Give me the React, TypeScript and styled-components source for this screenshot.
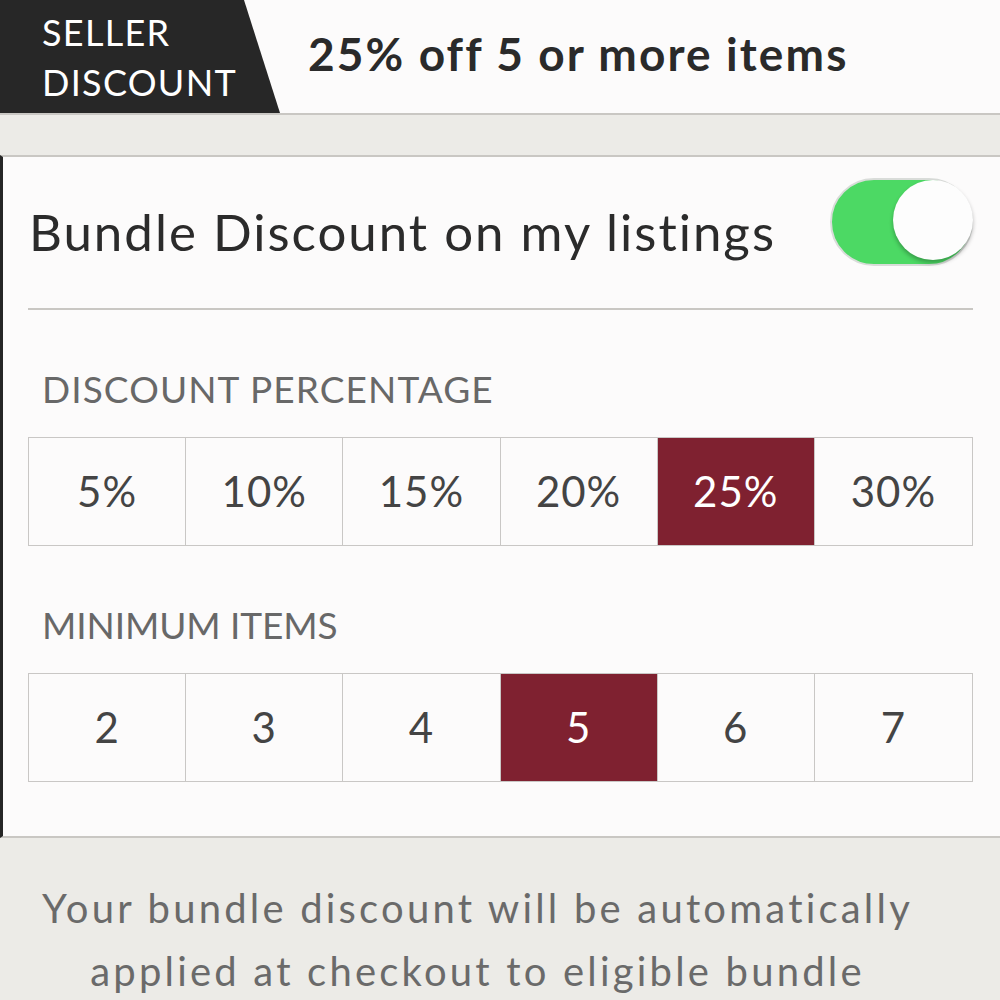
import React, { useState } from 'react';
import styled, { createGlobalStyle } from 'styled-components';

const GlobalStyle = createGlobalStyle`
  html, body {
    margin: 0;
    padding: 0;
    background: #ecebe7;
  }
  body {
    font-family: 'Lato', 'Open Sans', sans-serif;
    -webkit-font-smoothing: antialiased;
  }
`;

const Screen = styled.div`
  width: 1000px;
  height: 1000px;
  overflow: hidden;
  background: #ecebe7;
`;

const Header = styled.header`
  display: flex;
  align-items: center;
  height: 113px;
  background: #fcfbfb;
  border-bottom: 2px solid #c9c7c3;
`;

const Tab = styled.div`
  display: flex;
  flex-direction: column;
  justify-content: center;
  width: 280px;
  height: 100%;
  padding: 0 0 0 42px;
  box-sizing: border-box;
  background: #272727;
  clip-path: polygon(0 0, 244px 0, 280px 100%, 0 100%);
  color: #ffffff;
  font-size: 36px;
  line-height: 50px;
  letter-spacing: 1.3px;
`;

const HeaderTitle = styled.h1`
  margin: 0 0 6px 28px;
  font-size: 46px;
  font-weight: 700;
  letter-spacing: 2.1px;
  color: #2a2a2a;
`;

const Band = styled.div`
  height: 40px;
`;

const Panel = styled.section`
  background: #fcfbfb;
  border-top: 2px solid #c9c7c3;
  border-bottom: 2px solid #c9c7c3;
  border-left: 3px solid #262626;
  padding: 0 27px 54px 25px;
`;

const ToggleRow = styled.div`
  display: flex;
  align-items: center;
  justify-content: space-between;
  height: 151px;
  border-bottom: 2px solid #c9c7c3;
`;

const ToggleLabel = styled.span`
  font-size: 51px;
  letter-spacing: 2px;
  color: #2b2b2b;
  margin: 0 0 2px 1px;
`;

const Track = styled.button<{ on: boolean }>`
  position: relative;
  width: 143px;
  height: 88px;
  margin-bottom: 22px;
  padding: 0;
  border: 2px solid ${({ on }) => (on ? '#d9dcd9' : '#e3e3e3')};
  border-radius: 44px;
  background: ${({ on }) => (on ? '#4cd964' : '#ffffff')};
  cursor: pointer;
`;

const Knob = styled.span<{ on: boolean }>`
  position: absolute;
  top: 0;
  left: ${({ on }) => (on ? '61px' : '0')};
  width: 80px;
  height: 80px;
  border-radius: 50%;
  background: #fdfdfd;
  box-shadow: 0 3px 4px rgba(0, 0, 0, 0.28);
  transition: left 0.2s ease;
`;

const SectionLabel = styled.h2<{ spacing: number }>`
  margin: 0;
  padding: 56px 0 0 14px;
  height: 71px;
  font-size: 37px;
  font-weight: 400;
  letter-spacing: ${({ spacing }) => spacing}px;
  color: #686868;
`;

const Options = styled.div`
  display: grid;
  grid-template-columns: repeat(6, 1fr);
  height: 109px;
  border: 1.5px solid #c9c7c5;
  box-sizing: border-box;
`;

const Option = styled.button<{ selected: boolean }>`
  display: flex;
  align-items: center;
  justify-content: center;
  padding: 0 0 2px;
  border: none;
  border-right: 1.5px solid #c9c7c5;
  background: ${({ selected }) => (selected ? '#7f2130' : '#fcfbfb')};
  color: ${({ selected }) => (selected ? '#ffffff' : '#444444')};
  font-family: inherit;
  font-size: 42px;
  letter-spacing: 1px;
  cursor: pointer;

  &:last-child {
    border-right: none;
  }
`;

const Note = styled.p`
  margin: 0;
  padding: 39px 45px 0 0;
  text-align: center;
  font-size: 40px;
  line-height: 63px;
  letter-spacing: 3.2px;
  color: #6a6a6a;
`;

const percentages = [5, 10, 15, 20, 25, 30];
const minimums = [2, 3, 4, 5, 6, 7];

export default function App() {
  const [enabled, setEnabled] = useState(true);
  const [percent, setPercent] = useState(25);
  const [minItems, setMinItems] = useState(5);

  return (
    <>
      <GlobalStyle />
      <Screen>
        <Header>
          <Tab>
            <span>SELLER</span>
            <span>DISCOUNT</span>
          </Tab>
          <HeaderTitle>
            {percent}% off {minItems} or more items
          </HeaderTitle>
        </Header>
        <Band />
        <Panel>
          <ToggleRow>
            <ToggleLabel>Bundle Discount on my listings</ToggleLabel>
            <Track on={enabled} onClick={() => setEnabled(!enabled)}>
              <Knob on={enabled} />
            </Track>
          </ToggleRow>

          <SectionLabel spacing={1.1}>DISCOUNT PERCENTAGE</SectionLabel>
          <Options>
            {percentages.map((p) => (
              <Option key={p} selected={p === percent} onClick={() => setPercent(p)}>
                {p}%
              </Option>
            ))}
          </Options>

          <SectionLabel spacing={-0.1}>MINIMUM ITEMS</SectionLabel>
          <Options>
            {minimums.map((n) => (
              <Option key={n} selected={n === minItems} onClick={() => setMinItems(n)}>
                {n}
              </Option>
            ))}
          </Options>
        </Panel>
        <Note>
          Your bundle discount will be automatically applied at checkout to eligible bundle
        </Note>
      </Screen>
    </>
  );
}
